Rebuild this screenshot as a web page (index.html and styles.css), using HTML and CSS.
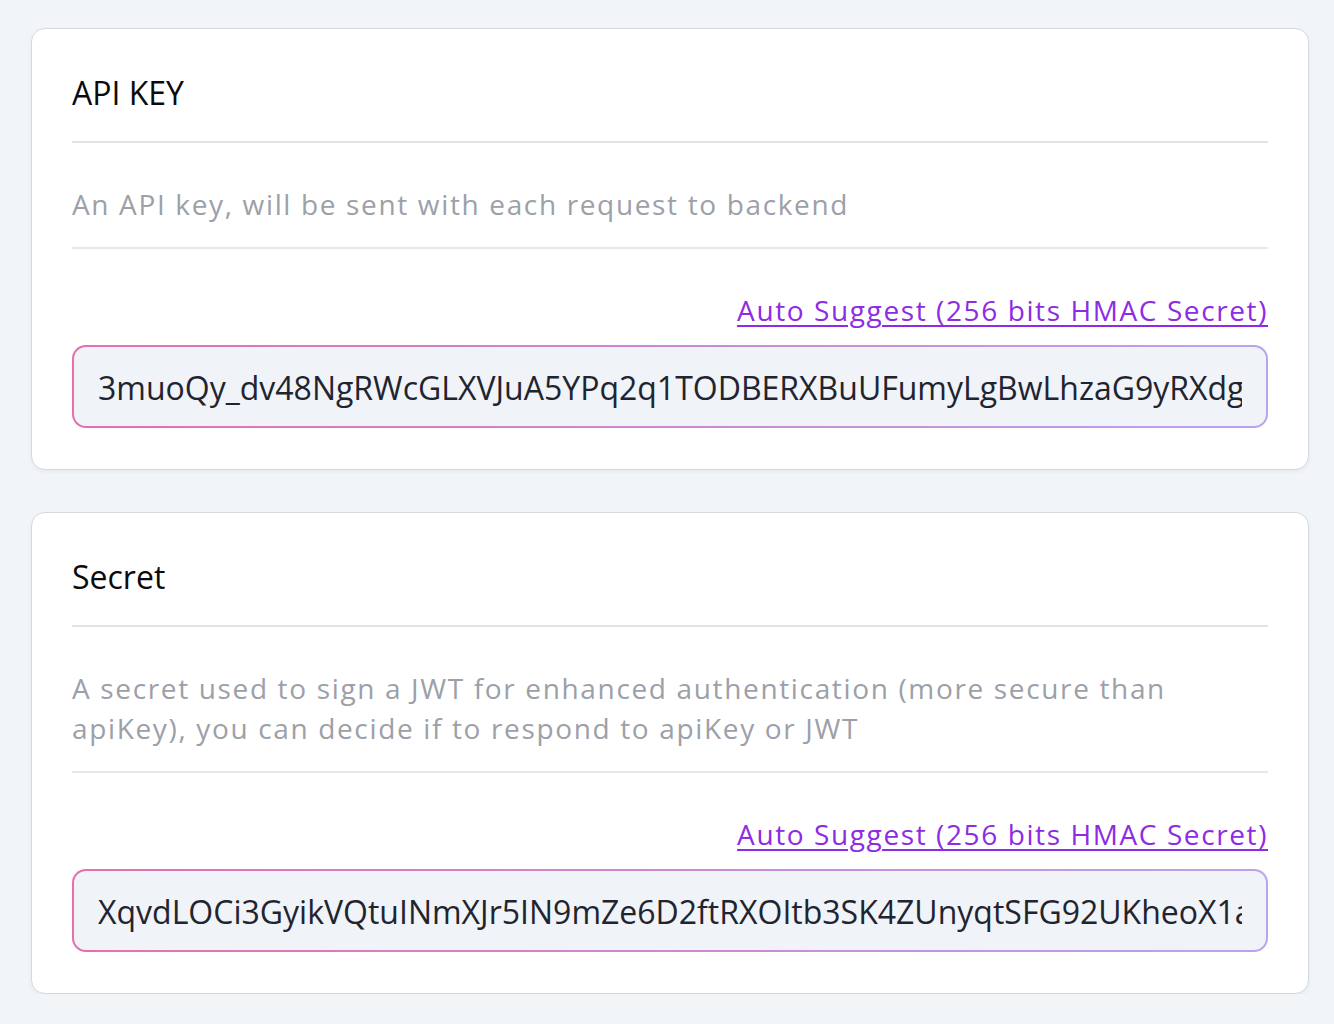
FILE: index.html
```html
<!DOCTYPE html>
<html>
<head>
<meta charset="utf-8">
<link rel="stylesheet" href="styles.css">
</head>
<body>
<div class="page">
  <section class="card">
    <h2 class="card-title">API KEY</h2>
    <p class="card-desc">An API key, will be sent with each request to backend</p>
    <div class="field">
      <div class="suggest-row"><a class="suggest" href="#">Auto Suggest (256 bits HMAC Secret)</a></div>
      <div class="input"><span class="input-text">3muoQy_dv48NgRWcGLXVJuA5YPq2q1TODBERXBuUFumyLgBwLhzaG9yRXdg</span></div>
    </div>
  </section>
  <section class="card">
    <h2 class="card-title">Secret</h2>
    <p class="card-desc">A secret used to sign a JWT for enhanced authentication (more secure than apiKey), you can decide if to respond to apiKey or JWT</p>
    <div class="field">
      <div class="suggest-row"><a class="suggest" href="#">Auto Suggest (256 bits HMAC Secret)</a></div>
      <div class="input"><span class="input-text">XqvdLOCi3GyikVQtuINmXJr5IN9mZe6D2ftRXOItb3SK4ZUnyqtSFG92UKheoX1aB7pQ</span></div>
    </div>
  </section>
</div>
</body>
</html>
```

FILE: styles.css
```css
* { box-sizing: border-box; }
html, body { margin: 0; padding: 0; }
body {
  background: #f2f5f8;
  font-family: "Open Sans", "Noto Sans", sans-serif;
}
.page {
  padding: 28px 25px 0 31px;
  display: flex;
  flex-direction: column;
  gap: 42px;
}
.card {
  background: #ffffff;
  border: 1px solid #d5d8dd;
  border-radius: 14px;
  box-shadow: 0 2px 4px rgba(30, 40, 60, 0.06);
  padding: 40px 40px 41px;
}
.card-title {
  margin: 0;
  font-size: 32px;
  font-weight: 400;
  line-height: 48px;
  color: #0b0b0c;
  padding-bottom: 24px;
  border-bottom: 2px solid #e1e3e6;
}
.card-desc {
  margin: 0;
  padding: 41px 0 23px;
  font-size: 28px;
  line-height: 40px;
  letter-spacing: 1.65px;
  color: #9ca0a8;
  border-bottom: 2px solid #e6e8eb;
}
.field {
  padding-top: 43px;
  display: flex;
  flex-direction: column;
  gap: 17px;
}
.suggest-row {
  display: flex;
  justify-content: flex-end;
  line-height: 36px;
}
.suggest {
  font-size: 28px;
  letter-spacing: 1.6px;
  color: #8e2be4;
  text-decoration: underline;
  text-underline-offset: 4px;
  text-decoration-thickness: 2px;
}
.input {
  height: 83px;
  border: 2px solid transparent;
  border-radius: 14px;
  background:
    linear-gradient(#f0f3f7, #f0f3f7) padding-box,
    linear-gradient(to right, #e66fae, #c68fd6 60%, #bba3ee) border-box;
  padding: 0 24px;
  display: flex;
  align-items: center;
  overflow: hidden;
}
.input-text {
  display: block;
  width: 100%;
  overflow: hidden;
  white-space: nowrap;
  font-size: 32px;
  line-height: 44px;
  padding-top: 2px;
  color: #1f2530;
}
```
